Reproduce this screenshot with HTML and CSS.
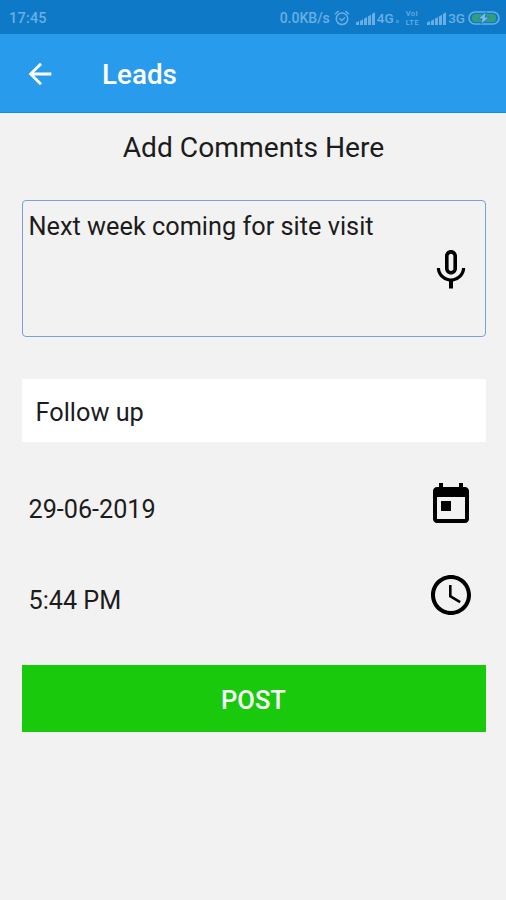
FILE: index.html
```html
<!DOCTYPE html>
<html lang="en">
<head>
  <meta charset="UTF-8">
  <title>Leads</title>
  <link rel="stylesheet" href="styles.css">
</head>
<body>
  <div class="statusbar">
    <span class="time">17:45</span>
    <div class="status-icons">
      <span class="speed">0.0KB/s</span>
      <svg class="alarm" width="16" height="16" viewBox="0 0 16 16" fill="none" stroke="currentColor" stroke-width="1.5">
        <circle cx="8" cy="8.8" r="5.8"/>
        <path d="M1 4.2L4.6 1M15 4.2L11.4 1M5.3 8.2L7.7 10.5L11 7.5"/>
      </svg>
      <svg class="signal" width="19" height="13" viewBox="0 0 19 13" fill="currentColor">
        <path d="M0 13v-2.5l3-1.5v4zM4 13V9l3-1.7V13zM8 13V6.7l3-1.7v8zM12 13V4.5l3-1.8V13zM16 13V2l3-1.8V13z"/>
      </svg>
      <span class="net">4G</span>
      <span class="dot"></span>
      <span class="volte"><span>VoI</span><span>LTE</span></span>
      <svg class="signal" width="19" height="13" viewBox="0 0 19 13" fill="currentColor">
        <path d="M0 13v-2.5l3-1.5v4zM4 13V9l3-1.7V13zM8 13V6.7l3-1.7v8zM12 13V4.5l3-1.8V13zM16 13V2l3-1.8V13z"/>
      </svg>
      <span class="net">3G</span>
      <svg class="battery" width="32" height="14" viewBox="0 0 32 14">
        <rect x="1" y="1" width="30" height="12" rx="6" fill="none" stroke="currentColor" stroke-width="1.6"/>
        <rect x="4" y="3" width="24" height="8" rx="3.5" fill="#2f9f80"/>
        <path d="M18.3 0.8L10 7.8h4.2L12.8 13.2L21.5 6.2h-4.4z" fill="#7fbdea" stroke="#147bc8" stroke-width=".8"/>
      </svg>
    </div>
  </div>
  <header class="appbar">
    <svg class="back" width="34" height="34" viewBox="0 0 24 24" fill="currentColor">
      <path d="M20 11H7.83l5.59-5.59L12 4l-8 8 8 8 1.41-1.41L7.83 13H20v-2z"/>
    </svg>
    <h1>Leads</h1>
  </header>
  <main class="container">
    <h2>Add Comments Here</h2>
    <div class="comment">
      <span class="comment-text">Next week coming for site visit</span>
      <svg class="mic" width="48" height="48" viewBox="0 0 24 24">
        <path d="M12 14.2c1.66 0 3-1.34 3-3V5c0-1.66-1.34-3-3-3S9 3.34 9 5v6.2c0 1.66 1.34 3 3 3zm-1.2-9.1c0-.66.54-1.2 1.2-1.2s1.2.54 1.2 1.2v6.2c0 .66-.54 1.2-1.2 1.2s-1.2-.54-1.2-1.2V5.1zM17.5 11c0 2.8-2.64 5.2-5.5 5.2S6.5 13.8 6.5 11H4.9c0 3.41 2.82 6.23 6.1 6.72V21.2h2v-3.48c3.28-.48 6.1-3.3 6.1-6.72h-1.6z"/>
      </svg>
    </div>
    <div class="select">Follow up</div>
    <div class="row date">
      <span>29-06-2019</span>
      <svg width="48" height="48" viewBox="0 0 24 24">
        <path d="M19 3h-1V1h-2v2H8V1H6v2H5c-1.11 0-2 .9-2 2v14c0 1.1.89 2 2 2h14c1.1 0 2-.9 2-2V5c0-1.1-.9-2-2-2zm0 16H5V8h14v11zM7 10h5v5H7z"/>
      </svg>
    </div>
    <div class="row hour">
      <span>5:44 PM</span>
      <svg width="48" height="48" viewBox="0 0 24 24">
        <path d="M11.99 2C6.47 2 2 6.48 2 12s4.47 10 9.99 10C17.52 22 22 17.52 22 12S17.52 2 11.99 2zM12 20c-4.42 0-8-3.58-8-8s3.58-8 8-8 8 3.58 8 8-3.58 8-8 8zm.3-13H11v6l5.25 3.15.65-1.1-4.6-2.75V7z"/>
      </svg>
    </div>
    <button class="post" type="button">POST</button>
  </main>
</body>
</html>
```

FILE: styles.css
```css
* {
  box-sizing: border-box;
}
body {
  font-family: Roboto, sans-serif;
  background-color: #f2f2f2;
  color: #1c1c1c;
  margin: 0;
}
svg {
  display: block;
  flex: none;
}
.statusbar {
  height: 34px;
  background-color: #0e7ac7;
  color: #69afe3;
  display: flex;
  justify-content: space-between;
  align-items: center;
  padding: 2px 6px 0 9px;
  font-size: 14.5px;
  font-weight: 500;
}
.time {
  letter-spacing: 0.2px;
}
.status-icons {
  display: flex;
  align-items: center;
}
.speed {
  font-size: 14px;
  margin-right: 4px;
}
.alarm {
  margin-right: 6px;
}
.signal {
  margin-right: 2px;
}
.net {
  font-size: 13.5px;
}
.dot {
  width: 3px;
  height: 3px;
  margin: 7px 7px 0 2px;
  background-color: #3c94d5;
}
.volte {
  display: flex;
  flex-direction: column;
  font-size: 7.5px;
  line-height: 9px;
  letter-spacing: 0.5px;
  margin-right: 8px;
}
.battery {
  margin-left: 3px;
}
.appbar {
  height: 79px;
  background-color: #289bed;
  border-bottom: 1px solid #188bdc;
  color: white;
  display: flex;
  align-items: center;
  padding: 2px 23px 0;
}
.appbar h1 {
  margin: 0 0 0 45px;
  font-size: 27.8px;
  font-weight: 500;
}
.container {
  padding: 15px 20.5px 0 21.5px;
}
h2 {
  margin: 0;
  font-size: 28.2px;
  line-height: 40px;
  font-weight: 400;
  text-align: center;
}
.comment {
  height: 137px;
  margin-top: 32px;
  border: 1.5px solid #7d9fd4;
  border-radius: 4px;
  display: flex;
  justify-content: space-between;
  padding: 9px 10px 0 6px;
  font-size: 25.3px;
  line-height: 34px;
}
.mic {
  margin-top: 36px;
}
.select {
  height: 63px;
  margin-top: 42px;
  padding-left: 14px;
  background-color: white;
  font-size: 25.3px;
  line-height: 68px;
}
.row {
  display: flex;
  justify-content: space-between;
  padding: 0 11px 0 7px;
  font-size: 25.2px;
  line-height: 58px;
}
.date {
  height: 56px;
  margin-top: 39px;
}
.hour {
  height: 56px;
  margin-top: 34px;
  line-height: 60px;
}
.post {
  display: block;
  width: 100%;
  height: 67px;
  margin-top: 38px;
  padding: 3px 0 0;
  border: none;
  background-color: #18c90c;
  color: white;
  font-family: inherit;
  font-size: 25.5px;
  font-weight: 500;
}
```
